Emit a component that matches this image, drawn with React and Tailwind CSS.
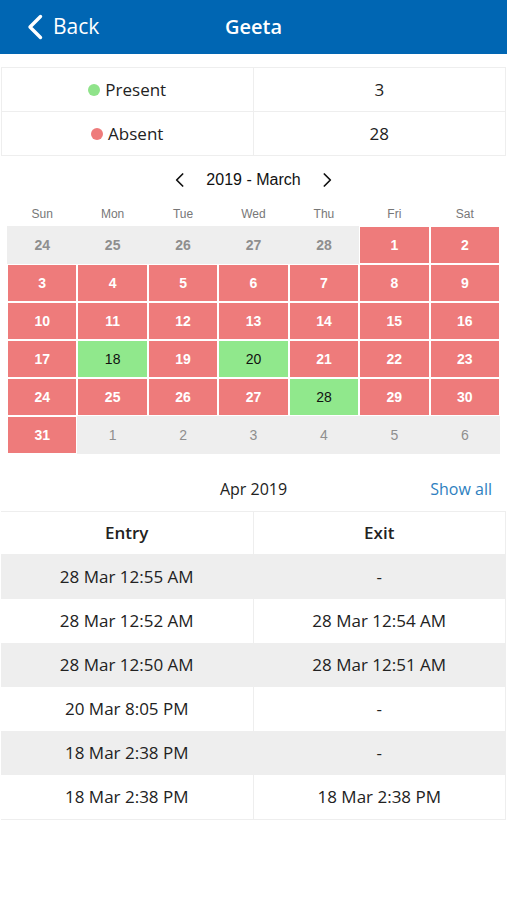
const days = ["Sun", "Mon", "Tue", "Wed", "Thu", "Fri", "Sat"];

const present = [18, 20, 28];

function buildCells() {
  const cells = [];
  [24, 25, 26, 27, 28].forEach((d) => cells.push({ d, kind: "prev" }));
  for (let d = 1; d <= 31; d++) {
    cells.push({ d, kind: present.includes(d) ? "present" : "absent" });
  }
  [1, 2, 3, 4, 5, 6].forEach((d) => cells.push({ d, kind: "next" }));
  return cells;
}

const logs = [
  ["28 Mar 12:55 AM", "-"],
  ["28 Mar 12:52 AM", "28 Mar 12:54 AM"],
  ["28 Mar 12:50 AM", "28 Mar 12:51 AM"],
  ["20 Mar 8:05 PM", "-"],
  ["18 Mar 2:38 PM", "-"],
  ["18 Mar 2:38 PM", "18 Mar 2:38 PM"],
];

function Chevron({ dir = "left", className }) {
  return (
    <svg viewBox="0 0 24 24" className={className} fill="none" stroke="currentColor" strokeWidth={2.6} strokeLinecap="round" strokeLinejoin="round">
      {dir === "left" ? <path d="M16 3 7 12l9 9" /> : <path d="m8 3 9 9-9 9" />}
    </svg>
  );
}

function BackChevron() {
  return (
    <svg viewBox="0 0 17 26" className="w-[17px] h-[26px]" fill="none" stroke="currentColor" strokeWidth={3.4} strokeLinecap="round" strokeLinejoin="round">
      <path d="M13.5 2.5 3 13l10.5 10.5" />
    </svg>
  );
}

function DayCell({ cell }) {
  if (cell.kind === "prev" || cell.kind === "next") {
    return (
      <div
        className={
          cell.kind === "prev"
            ? "h-[38px] flex items-center justify-center bg-[#eeeeee] border border-[#eeeeee] text-[14px] text-[#8e8e8e] font-bold"
            : "h-[38px] flex items-center justify-center bg-[#eeeeee] border border-[#eeeeee] text-[14px] text-[#8e8e8e]"
        }
      >
        {cell.d}
      </div>
    );
  }
  const present = cell.kind === "present";
  return (
    <div
      className={
        present
          ? "h-[38px] flex items-center justify-center bg-[#90e88c] border border-white text-[14px] text-[#111]"
          : "h-[38px] flex items-center justify-center bg-[#ee7b7b] border border-white text-[14px] text-white font-bold"
      }
    >
      {cell.d}
    </div>
  );
}

export default function App() {
  const cells = buildCells();
  return (
    <div className="w-[507px] h-[900px] bg-white font-['Open_Sans',sans-serif] text-[#222]">
      <div className="h-[54px] bg-[#0066b3] flex items-center relative text-white">
        <div className="flex items-center pl-[27px]">
          <BackChevron />
          <span className="ml-[9px] text-[21px]">Back</span>
        </div>
        <div className="absolute left-0 right-0 text-center text-[20px] font-semibold pointer-events-none">Geeta</div>
      </div>

      <div className="mt-[13px] mx-[1px] border border-[#eeeeee]">
        <div className="flex h-[44px] border-b border-[#eeeeee]">
          <div className="w-1/2 flex items-center justify-center border-r border-[#eeeeee] text-[17px]">
            <span className="w-[12px] h-[12px] rounded-full bg-[#8fe38a] mr-[5px]" />
            Present
          </div>
          <div className="w-1/2 flex items-center justify-center text-[17px]">3</div>
        </div>
        <div className="flex h-[43px]">
          <div className="w-1/2 flex items-center justify-center border-r border-[#eeeeee] text-[17px]">
            <span className="w-[12px] h-[12px] rounded-full bg-[#ee7b7b] mr-[5px]" />
            Absent
          </div>
          <div className="w-1/2 flex items-center justify-center text-[17px]">28</div>
        </div>
      </div>

      <div className="font-['Liberation_Sans',sans-serif]">
        <div className="mt-[11px] h-[26px] flex items-center justify-center text-[#111]">
          <Chevron className="w-[16px] h-[16px]" />
          <span className="mx-[18px] text-[16px]">2019 - March</span>
          <Chevron dir="right" className="w-[16px] h-[16px]" />
        </div>
        <div className="mx-[7px] mt-[11px] grid grid-cols-7 h-[20px] items-center text-[12px] text-[#777] text-center">
          {days.map((d) => (
            <div key={d}>{d}</div>
          ))}
        </div>
        <div className="mx-[7px] mt-[2px] grid grid-cols-7">
          {cells.map((c, i) => (
            <DayCell key={i} cell={c} />
          ))}
        </div>
      </div>

      <div className="mt-[22px] h-[26px] flex items-center relative">
        <div className="w-full text-center text-[16px]">Apr 2019</div>
        <div className="absolute right-[15px] text-[16px] text-[#2e7fc0]">Show all</div>
      </div>

      <div className="mt-[9px] mx-[1px] border-t border-[#eeeeee]">
        <div className="flex h-[43px] bg-white border-b border-[#eeeeee]">
          <div className="w-1/2 flex items-center justify-center font-semibold text-[17px] border-r border-[#eeeeee]">Entry</div>
          <div className="w-1/2 flex items-center justify-center font-semibold text-[17px] border-r border-[#eeeeee]">Exit</div>
        </div>
        {logs.map(([a, b], i) => (
          <div key={i} className={i % 2 === 0 ? "flex h-[44px] bg-[#eeeeee]" : "flex h-[44px] bg-white"}>
            <div className="w-1/2 flex items-center justify-center text-[17px] border-r border-[#eeeeee]">{a}</div>
            <div className="w-1/2 flex items-center justify-center text-[17px] border-r border-[#eeeeee]">{b}</div>
          </div>
        ))}
        <div className="h-px bg-[#eeeeee]" />
      </div>
    </div>
  );
}
